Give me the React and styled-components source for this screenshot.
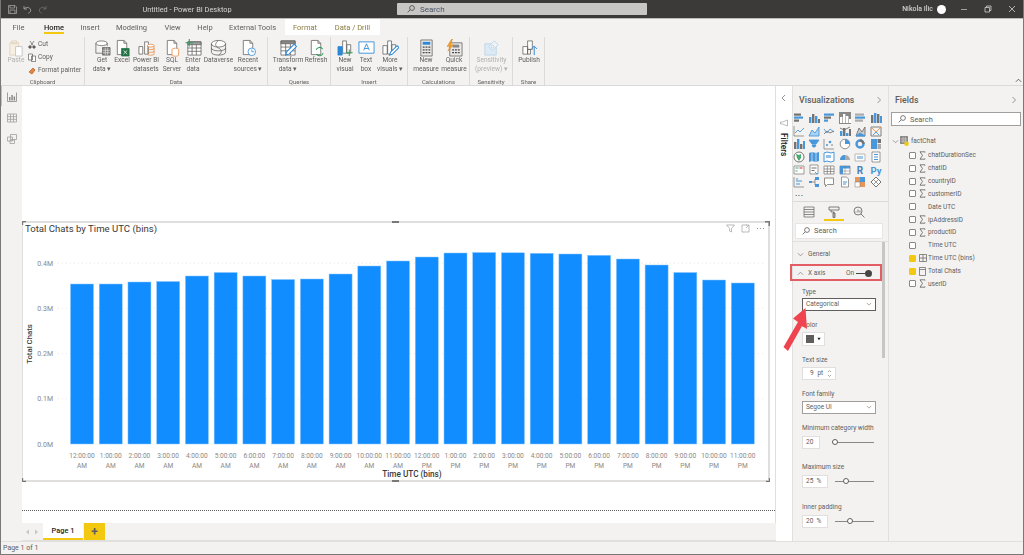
import React from 'react';
import styled, { createGlobalStyle } from 'styled-components';

const FONT = 'Roboto, "Open Sans", "Liberation Sans", sans-serif';

const Global = createGlobalStyle`
  html, body { margin: 0; padding: 0; background: #fff; }
  body { font-family: ${FONT}; overflow: hidden; }
  * { box-sizing: border-box; }
`;

const Win = styled.div`
  width: 1024px; height: 555px; display: flex; flex-direction: column;
  border: 1px solid #7a7876; border-top: 0; color: #252423; overflow: hidden;
  position: relative; filter: blur(0.35px);
`;

/* ---------- title bar ---------- */
const TitleBar = styled.div`
  height: 18px; flex: none; background: #3b3a39; display: flex; align-items: center; position: relative;
  margin: 0 -1px;
`;
const QuickIcons = styled.div`
  width: 397px; flex: none; display: flex; align-items: center; position: relative; padding-left: 8px; gap: 6px;
`;
const AppTitle = styled.div`
  position: absolute; left: 147px; width: 80px; text-align: center; white-space: nowrap; font-size: 7.4px; color: #d6d4d2;
  display: flex; justify-content: center;
`;
const TitleSearch = styled.div`
  width: 250px; height: 12px; background: #c8c6c4; border-radius: 1px; display: flex; align-items: center; gap: 5px; padding-left: 10px;
  font-size: 8px; color: #4a5568;
`;
const WinRight = styled.div`
  flex: 1; display: flex; align-items: center; justify-content: flex-end; color: #d2d0ce; font-size: 7px; font-weight: 500;
`;
const Avatar = styled.span`
  width: 9px; height: 9px; border-radius: 50%; background: #fff; margin: 0 6px 0 4px;
`;
const WinBtn = styled.span`
  width: 24px; display: flex; justify-content: center;
`;

/* ---------- tabs ---------- */
const TabRow = styled.div`
  height: 17px; flex: none; background: #f3f2f1; border-top: 1px solid #bdbbb9; position: relative; display: grid;
  grid-template-columns: 35px 36px 36px 47px 35px 30px 65px 40px 55px 1fr; align-items: stretch;
  font-size: 7.5px; color: #605e5c;
`;
const Tab = styled.div`
  display: flex; align-items: center; justify-content: center; position: relative; white-space: nowrap;
  font-weight: ${p => (p.$active ? 500 : 400)};
  color: ${p => (p.$gold ? '#8a7a3c' : p.$active ? '#252423' : '#605e5c')};
  background: ${p => (p.$white ? '#fff' : 'transparent')};
  ${p => p.$active && `&::after { content: ''; position: absolute; left: 8px; right: 8px; bottom: 1px; height: 2px; background: #f2c811; }`}
`;

/* ---------- ribbon ---------- */
const Ribbon = styled.div`
  height: 51px; flex: none; background: #f3f2f1; border-bottom: 1px solid #dcdad8; display: flex; position: relative;
`;
const Group = styled.div`
  width: ${p => p.$w}px; flex: none; border-right: 1px solid #dcdad8; margin: 2px 0 0; display: flex; flex-direction: column;
`;
const GroupBody = styled.div`
  flex: 1; display: flex; padding: 2px 0 0 ${p => p.$pl || 0}px; min-height: 0;
`;
const GroupLabel = styled.div`
  height: 7px; font-size: 6px; color: #605e5c; text-align: center; line-height: 7px;
`;
const RibBtn = styled.div`
  width: ${p => p.$w}px; flex: none; display: flex; flex-direction: column; align-items: center; text-align: center;
  font-size: 6.6px; line-height: 9px; color: ${p => (p.$off ? '#b3b0ad' : '#605e5c')}; white-space: nowrap;
  svg { display: block; margin-bottom: -1px; flex: none; width: 17px; height: 18px; }
`;
const SmallCol = styled.div`
  width: 56px; flex: none; display: flex; flex-direction: column; gap: 3px;
`;
const SmallBtn = styled.div`
  display: flex; align-items: center; gap: 2px; font-size: 6.6px; line-height: 10px; color: #605e5c; white-space: nowrap; height: 10px;
`;
const Collapse = styled.div`
  position: absolute; right: 1px; bottom: 1px; display: flex;
`;

/* ---------- main ---------- */
const Main = styled.div`
  flex: 1; min-height: 0; display: flex; background: #f3f2f1;
`;
const Rail = styled.div`
  width: 21px; flex: none; background: #f3f2f1; display: flex; flex-direction: column; align-items: center; position: relative;
  padding-top: 6px; gap: 11px;
`;
const RailMark = styled.div`
  position: absolute; left: -1px; top: 0; width: 2px; height: 20px; background: #f2c811;
`;
const Center = styled.div`
  width: 754px; flex: none; display: flex; flex-direction: column;
`;
const Canvas = styled.div`
  flex: 1; background: #fff; padding-top: 135px; min-height: 0; border-right: 1px solid #e1dfdd;
`;
const Visual = styled.div`
  width: 748px; height: 261px; border: 1px solid #e1dfdd; border-width: 2px 2px 2px 1px; position: relative;
`;
const Handle = styled.span`
  position: absolute; background: #7a7876;
  ${p => p.$pos === 'tl' && 'left:-1px; top:-2px; width:4px; height:4px; clip-path: polygon(0 0,100% 0,100% 30%,30% 30%,30% 100%,0 100%);'}
  ${p => p.$pos === 'tr' && 'right:-2px; top:-2px; width:5px; height:5px; clip-path: polygon(0 0,100% 0,100% 100%,70% 100%,70% 30%,0 30%);'}
  ${p => p.$pos === 'bl' && 'left:-1px; bottom:-2px; width:4px; height:4px; clip-path: polygon(0 0,30% 0,30% 70%,100% 70%,100% 100%,0 100%);'}
  ${p => p.$pos === 'br' && 'right:-2px; bottom:-2px; width:4px; height:4px; clip-path: polygon(70% 0,100% 0,100% 100%,0 100%,0 70%,70% 70%);'}
  ${p => p.$pos === 't' && 'left:369px; top:-2px; width:7px; height:2px;'}
  ${p => p.$pos === 'b' && 'left:369px; bottom:-2px; width:7px; height:2px;'}
`;
const VisualTitle = styled.div`
  position: absolute; left: 2px; top: 0; font-size: 9.6px; line-height: 12px; color: #3b3a39; white-space: nowrap;
`;
const VisualTools = styled.div`
  position: absolute; right: 3px; top: 1px; display: flex; gap: 6px; align-items: center;
`;
const Dotted = styled.div`
  margin-top: 28px; border-top: 1px dotted #605e5c; width: 753px;
`;
const PageTabs = styled.div`
  height: 18px; flex: none; background: #f3f2f1; display: flex; align-items: stretch; border-bottom: 1px solid #e1dfdd;
`;
const Nav = styled.div`
  width: 21px; flex: none; display: flex; align-items: center; justify-content: space-between; padding: 0 4px 0 3px; color: #c8c6c4;
`;
const PageTab = styled.div`
  width: 40px; background: #fff; border-bottom: 2px solid #f2c811; font-size: 7.4px; display: flex; align-items: center; justify-content: center; color: #252423; font-weight: 500;
`;
const AddTab = styled.div`
  width: 21px; background: #f2c811; font-size: 12px; font-weight: 700; color: #605e5c; display: flex; align-items: center; justify-content: center; line-height: 1; margin-left: 1px;
`;

const FilterPane = styled.div`
  width: 17px; flex: none; background: #fff; display: flex; flex-direction: column; align-items: center; padding: 8px 1px 0 0; border-right: 1px solid #e1dfdd;
`;
const FilterSpacer = styled.div`
  height: 17px; flex: none;
`;
const FilterLabel = styled.div`
  writing-mode: vertical-rl; font-size: 8.4px; font-weight: 500; color: #252423; margin-top: 6px; line-height: 10px;
`;
const VizPane = styled.div`
  width: 96px; flex: none; display: flex; flex-direction: column; border-right: 1px solid #e1dfdd; position: relative;
`;
const PaneHead = styled.div`
  height: 24px; flex: none; display: flex; align-items: center; justify-content: space-between; padding: 3px 5px 0 6px; font-size: 8.8px; font-weight: 500; color: #605e5c;
`;
const VizGrid = styled.div`
  display: grid; grid-template-columns: repeat(6, 15.4px); grid-auto-rows: 12.8px; margin-left: -2px; padding-top: 2px; justify-items: center; align-items: center;
`;
const VizCell = styled.div`
  width: 12px; height: 12px; display: flex; align-items: center; justify-content: center; background: ${p => (p.$on ? '#8a8886' : 'transparent')};
  opacity: ${p => (p.$on ? 1 : 0.85)};
`;
const Dots = styled.div`
  font-size: 8px; letter-spacing: 0.5px; color: #605e5c; line-height: 9px; padding-left: 2px; height: 9px; font-weight: 700;
`;
const PaneTabs = styled.div`
  margin-top: 3px; border-top: 1px solid #dcdad8; height: 21px; display: flex; padding-left: 9px; gap: 8px; align-items: flex-start; flex: none;
`;
const PaneTab = styled.div`
  width: 14px; height: 19px; display: flex; justify-content: center; padding-top: 4px; position: relative; margin: 0 ${p => (p.$on ? 3 : 0)}px;
  ${p => p.$on && `&::after { content:''; position:absolute; left:-3px; right:-3px; bottom:0; height:1.5px; background:#f2c811; }`}
`;
const SearchBox = styled.div`
  height: ${p => p.$h}px; background: #fff; border: 1px solid ${p => (p.$dark ? '#a19f9d' : '#e8e6e4')}; display: flex; align-items: center; gap: 4px; padding-left: 6px;
  font-size: 7.4px; color: #605e5c; margin: ${p => p.$m}; flex: none;
`;
const Scroller = styled.div`
  flex: 1; display: flex; min-height: 0; position: relative; border-top: 1px solid #e1dfdd;
`;
const Props = styled.div`
  flex: 1; min-width: 0; display: flex; flex-direction: column; font-size: 6.5px; color: #605e5c; padding-top: 3px;
`;
const Bar = styled.div`
  position: absolute; right: 3px; top: 0; width: 3px; height: 116px; background: #c8c6c4;
`;
const SectionRow = styled.div`
  height: 19px; display: flex; align-items: center; gap: 4px; padding-left: 4px; flex: none; white-space: nowrap; position: relative;
`;
const OnOff = styled.div`
  margin-left: auto; margin-right: 17px; display: flex; align-items: center; gap: 2px;
`;
const OffTrack = styled.span`
  width: 15px; height: 1px; background: #484644; position: relative; display: block;
  &::after { content:''; position:absolute; right:-1px; top:-3px; width:7px; height:7px; border-radius:50%; background:#484644; }
`;
const RedRect = styled.div`
  position: absolute; left: -3px; right: 6px; top: 0; bottom: 2px; border: 2px solid #e35d65;
`;
const Field = styled.div`
  padding-left: 9px; display: flex; flex-direction: column; flex: none; margin-top: ${p => p.$mt || 0}px; position: relative;
`;
const FieldLabel = styled.div`
  line-height: 10px; height: 10px; white-space: nowrap; margin-bottom: ${p => p.$mb ?? 2}px;
`;
const Box = styled.div`
  width: ${p => p.$w}px; height: ${p => p.$h || 13}px; background: #fff; border: 1px solid ${p => p.$b || '#e1dfdd'}; display: flex; align-items: center;
  padding: 0 3px; flex: none; justify-content: ${p => (p.$between ? 'space-between' : 'flex-start')}; gap: 3px; color: #605e5c;
`;
const SliderRow = styled.div`
  display: flex; align-items: center; gap: ${p => p.$gap}px;
`;
const Track = styled.div`
  width: ${p => p.$w}px; height: 1px; background: #8a8886; position: relative;
`;
const Thumb = styled.span`
  position: absolute; top: -2.5px; width: 6px; height: 6px; border: 1px solid #605e5c; border-radius: 50%; background: #fff;
`;
const Swatch = styled.span`
  width: 8px; height: 8px; background: #605e5c; display: block; flex: none;
`;
const FieldsPane = styled.div`
  flex: 1; display: flex; flex-direction: column; background: #f3f2f1;
`;
const TreeHead = styled.div`
  display: flex; align-items: center; font-size: 6.5px; color: #605e5c; height: 12px; margin: 9px 0 2px 3px; position: relative; gap: 1px;
`;
const TreeRow = styled.div`
  height: 12.85px; display: flex; align-items: center; font-size: 6.5px; color: #605e5c; padding-left: 20px; white-space: nowrap;
`;
const Check = styled.span`
  width: 7px; height: 7px; border: 1px solid #8a8886; background: ${p => (p.$on ? '#f2c811' : '#fff')}; flex: none; margin-right: 2px; display: block; border-radius: 1px;
  ${p => p.$on && 'border-color:#f2c811;'}
`;
const IconSlot = styled.span`
  width: 9px; flex: none; display: flex; justify-content: center; margin-right: 1px;
`;
const Arrow = styled.svg`
  position: absolute; left: 775px; top: 300px; pointer-events: none;
`;
const Status = styled.div`
  height: 13px; flex: none; background: #f3f2f1; border-top: 1px solid #e1dfdd; font-size: 7px; color: #605e5c; line-height: 13px; padding-left: 2px;
`;

/* ---------- icons ---------- */
const Save = () => <svg width="9" height="9" viewBox="0 0 9 9" fill="none" stroke="#a19f9d" strokeWidth=".8"><path d="M.5.5h6.5l1.500 1.500v6.500h-8z"/><path d="M2 .5v2.500h4.500v-2.500M2 8.500v-3.500h5v3.500"/></svg>;
const Undo = ({ c = '#a19f9d', flip }) => <svg width="9" height="9" viewBox="0 0 9 9" fill="none" stroke={c} strokeWidth=".9" style={flip ? { transform: 'scaleX(-1)' } : null}><path d="M1 1v3h3"/><path d="M1.200 4c1.500-2.500 6-2 6.500 1 .2 1.500-.8 2.800-2.500 3.200"/></svg>;
const Mag = ({ c = '#605e5c', s = 8 }) => <svg width={s} height={s} viewBox="0 0 8 8" fill="none" stroke={c} strokeWidth=".8"><circle cx="5" cy="3" r="2.400"/><path d="M3.200 4.800L.6 7.400"/></svg>;
const Chev = ({ d = 'r', c = '#8a8886', s = 7 }) => {
  const p = { r: 'M2.500 1l3 3-3 3', l: 'M5 1L2 4l3 3', d: 'M1 2.500l3 3 3-3', u: 'M1 5.500l3-3 3 3' }[d];
  return <svg width={s} height={s} viewBox="0 0 8 8" fill="none" stroke={c} strokeWidth=".9"><path d={p}/></svg>;
};
const Small = ({ children }) => <svg width="8" height="9" viewBox="0 0 8 9" fill="none" stroke="#605e5c" strokeWidth=".7">{children}</svg>;

const G = '#605e5c', L = '#8a8886';
const Ico = ({ children }) => <svg width="18" height="19" viewBox="0 0 18 19" fill="none" stroke={G} strokeWidth=".8">{children}</svg>;
const Doc = <path d="M3.500 1.500h7l3 3v12h-10z M10.500 1.500v3h3" fill="#fff"/>;

const rib = {
  paste: <svg width="18" height="19" viewBox="0 0 18 19" fill="none" stroke="#e3d3bd" strokeWidth="1"><path d="M2 4h9v13h-9z" fill="#f6efe3"/><path d="M4 2h5v3h-5z"/><path d="M8 8h7v10h-7z" fill="#fff" stroke="#c8c6c4"/></svg>,
  get: <Ico><ellipse cx="8" cy="4.500" rx="6" ry="2.500" fill="#fff"/><path d="M2 4.500v10.500h9M14 4.500v3"/><path d="M9 9h8v8h-8z" fill={L} stroke={G}/><path d="M9 12h8M9 14.500h8M12 9v8M14.500 9v8" stroke="#fff" strokeWidth=".5"/></Ico>,
  excel: <Ico>{Doc}<path d="M8 10h8v8h-8z" fill="#217346" stroke="#217346"/><path d="M10 12l4 4M14 12l-4 4" stroke="#fff"/></Ico>,
  pbi: <Ico><path d="M7 3h4v13h-4zM1 8h4v8h-4z" fill="#fff"/><ellipse cx="13.500" cy="7" rx="3.500" ry="1.500" stroke="#e8853a" fill="#fff"/><path d="M10 7v9c0 1.500 7 1.500 7 0v-9M10 10c0 1.500 7 1.500 7 0M10 13c0 1.500 7 1.500 7 0" stroke="#e8853a"/></Ico>,
  sql: <Ico>{Doc}<ellipse cx="12" cy="11" rx="3.500" ry="1.300" stroke="#e8853a" fill="#fff"/><path d="M8.500 11v6c0 1.500 7 1.500 7 0v-6" stroke="#e8853a" fill="#fff"/></Ico>,
  enter: <Ico><path d="M3 3h14v14h-14z" fill="#fff"/><path d="M3 3h14v3h-14z" fill="#a19f9d"/><path d="M3 9.500h14M3 13h14M7.500 6v11M12 6v11"/><path d="M4.500 0v8M.5 4h8" stroke="#2e9e5b" strokeWidth="1.100"/></Ico>,
  dv: <Ico><ellipse cx="9" cy="5" rx="7.500" ry="3.500" fill="#fff"/><path d="M1.500 5v9c0 4 15 4 15 0v-9M1.500 9.500c0 4 15 4 15 0"/><path d="M9 1.500c-4 3-4 6 0 8s4 5 0 7.500" /></Ico>,
  recent: <Ico>{Doc}<circle cx="12.500" cy="13.500" r="4" fill="#fff" stroke="#2b88d8"/><path d="M12.500 11v2.500h2.500" stroke="#2b88d8"/></Ico>,
  transform: <Ico><path d="M1 2h15v15h-15z" fill="#fff"/><path d="M1 2h15v3h-15z" fill={L}/><path d="M1 8.500h15M1 12.500h15M6 5v12M11 5v12"/><path d="M6 17l1-3.500 8-8 2.500 2.500-8 8z" fill="#fff" stroke="#2b88d8" strokeWidth="1.100"/></Ico>,
  refresh: <Ico>{Doc}<path d="M8.500 11.500a4 4 0 0 1 7-1M16 15a4 4 0 0 1-7 1" stroke="#2e9e5b" strokeWidth="1.100" fill="none"/></Ico>,
  newvis: <Ico><path d="M6 2h4v13h-4zM10.500 6h4v9h-4z" fill="#fff"/><path d="M1 8h4.500v9h-4.500z" fill="#2b88d8" stroke="#2b88d8"/><path d="M13 11v7M9.500 14.500h7" stroke="#2e9e5b" strokeWidth="1.100"/></Ico>,
  text: <svg width="18" height="19" viewBox="0 0 18 19" fill="none" stroke="#2b88d8" strokeWidth=".9"><path d="M1 3h16v12h-16z" fill="#fff"/><path d="M6 12l3-7 3 7M7 10h4"/></svg>,
  more: <Ico><path d="M6 2h4v14h-4zM1 7h4.500v9h-4.500zM10.500 6h4v6h-4z" fill="#fff"/><path d="M8 17l1-3 7-7 2 2-7 7z" fill="#fff" stroke="#2b88d8" strokeWidth="1.100"/></Ico>,
  calc: <Ico><path d="M3 1h12v17h-12z" fill="#e9e7e5"/><path d="M5 3h8v3h-8z" fill="#2b88d8" stroke="none"/><path d="M5 8.500h2M8 8.500h2M11 8.500h2M5 11.500h2M8 11.500h2M11 11.500h2M5 14.500h2M8 14.500h2M11 14.500h2" strokeWidth="1.300" stroke="#484644"/></Ico>,
  quick: <Ico><path d="M4 4h13v14h-13z" fill="#e9e7e5"/><path d="M7 6h7v3h-7z" fill="#8a8886" stroke="none"/><path d="M6.500 11.500h2M9.500 11.500h2M12.500 11.500h2M6.500 14.500h2M9.500 14.500h2M12.500 14.500h2" strokeWidth="1.300" stroke="#484644"/><path d="M6 0L1 8h3l-2 5 6-7h-3l2-6z" fill="#f0a030" stroke="#d08020" strokeWidth=".4"/></Ico>,
  sens: <svg width="18" height="19" viewBox="0 0 18 19" fill="none" stroke="#bcd3e6" strokeWidth=".9"><path d="M2 5h12v12h-12z" fill="#dceaf5"/><path d="M6 8l6-6 4 4-6 6z" fill="#eef4f9"/><circle cx="10" cy="8" r="1.500"/></svg>,
  publish: <Ico><path d="M7 2h5v9h-5zM2 8h5v8h-5zM7 11h3v5h-3z" fill="#fff"/><path d="M14 17v-9M11 10.500l3-3 3 3" stroke="#2b88d8" strokeWidth="1"/></Ico>,
};

/* visualization gallery */
const B = '#2b88d8', K = '#605e5c', GR = '#a19f9d', O = '#e8853a', Gn = '#2e9e5b';
const bars = (h, c1 = B, c2 = K) => h.map((v, i) => <rect key={i} x={1 + i * 3} y={11 - v} width="2.400" height={v} fill={i % 2 ? c2 : c1} />);
const hbars = (w, c1 = K, c2 = B) => w.map((v, i) => <rect key={i} x="1" y={1.500 + i * 3} width={v} height="2.200" fill={i % 2 ? c2 : c1} />);
const line = (d, c = B, f) => <path d={d} fill={f || 'none'} stroke={c} strokeWidth=".9" />;
const axes = <path d="M1 1v10h10" stroke={K} strokeWidth=".7" fill="none" />;
const gallery = [
  hbars([7, 9, 5]), bars([6, 9, 7, 4]), hbars([10, 7, 4], B, K), <g key="s">{bars([6, 9, 7, 4], '#fff', '#fff')}</g>, hbars([9, 10, 8], GR, B), bars([8, 10, 9, 7], K, B),
  <g>{axes}{line('M2 8l3-3 2 2 4-4')}</g>, <g>{line('M1 11l3-6 3 3 4-6v9z', B, '#9fcdf0')}</g>, <g>{line('M1 4l3 4 3-4 4 3', B)}{line('M1 9l3-3 3 2 4-2', K)}</g>, <g>{bars([5, 8, 3, 7])}{line('M1 3l4 2 6-3', K)}</g>, <g>{line('M2 11l3-8 3 4 3-5v9z', K, '#c7c5c3')}{line('M2 11l4-3 5 3z', B, '#2b88d8')}</g>, <g>{line('M1 2h10v9h-10z', K)}{line('M1 2l5 5 5-5', O)}{line('M3 10l3-3 3 3', B)}</g>,
  <g>{bars([7, 10, 5, 8], K, B)}</g>, <g>{line('M1 2h10l-3 4h-4zM4 7h4l-1 2h-2z', B, B)}</g>, <g>{axes}<circle cx="4" cy="7" r="1" fill={B}/><circle cx="7" cy="4" r="1.300" fill={B}/><circle cx="9" cy="7" r=".8" fill={K}/></g>, <g><circle cx="6" cy="6" r="4.800" fill="#fff" stroke={K} strokeWidth=".8"/><path d="M6 6v-4.800a4.800 4.800 0 0 1 4.800 4.800z" fill={B}/></g>, <g><circle cx="6" cy="6" r="3.500" fill="none" stroke={B} strokeWidth="2.400"/><path d="M6 2.500a3.500 3.500 0 0 1 3.500 3.500" fill="none" stroke={K} strokeWidth="2.400"/></g>, <g><path d="M1 1h6v10h-6z" fill={B}/><path d="M7.500 1h3.500v4h-3.500z" fill={K}/><path d="M7.500 6h3.500v5h-3.500z" fill={GR}/></g>,
  <g><circle cx="6" cy="6" r="5" fill="#fff" stroke={K}/><path d="M3 3l3 1 2-1v4l-2 3-2-3z" fill={Gn}/></g>, <g><path d="M1 2l3-1 4 1 3-1v9l-3 1-4-1-3 1z" fill={B}/><path d="M4 1v9M8 2v9" stroke="#fff" strokeWidth=".6"/></g>, <g><path d="M1 2l3-1 4 1 3-1v9l-3 1-4-1-3 1z" fill="#fff" stroke={B}/><path d="M3 4h5v3h-5z" fill={B} opacity=".6"/></g>, <g><path d="M1 9a5 5 0 0 1 10 0z" fill={GR}/><path d="M1 9a5 5 0 0 1 5-5v5z" fill={B}/></g>, <g><path d="M1 3h10v7h-10z" fill="#fff" stroke={GR} strokeWidth=".8"/><path d="M3 5h6v3h-6z" fill={B} opacity=".5"/></g>, <g><path d="M2 1h8v10h-8z" fill="#fff" stroke={K} strokeWidth=".7"/><path d="M4 3.500h4M4 6h4M4 8.500h4" stroke={B}/></g>,
  <g><path d="M1 2h10v8h-10z" fill="#fff" stroke={K} strokeWidth=".7"/><path d="M2.500 4h3M2.500 7h2" stroke={Gn} strokeWidth="1.200"/><path d="M6.500 4h3" stroke="#d13438" strokeWidth="1.200"/></g>, <g><path d="M2 1h8v9h-8z" fill="#fff" stroke={K} strokeWidth=".7"/><path d="M3.500 4h5M3.500 6.500h3" stroke={K}/><path d="M7 8l2 2" stroke={B}/></g>, <g><path d="M1 2h10v8h-10zM1 5h10M1 7.500h10M4.300 2v8M7.600 2v8" fill="#fff" stroke={K} strokeWidth=".7"/></g>, <g><path d="M1 2h10v8h-10z" fill="#fff" stroke={K} strokeWidth=".7"/><path d="M1 2h10v2.500h-10zM1 4.500h3v5.500h-3z" fill={B}/><path d="M1 7h10M6 2v8" stroke={K} strokeWidth=".5"/></g>, <text x="6" y="10" textAnchor="middle" fontSize="10" fontWeight="700" fill="#2b6cb0" fontFamily="Roboto">R</text>, <text x="6" y="10" textAnchor="middle" fontSize="9.500" fontWeight="700" fill="#2b88d8" fontFamily="Roboto">Py</text>,
  <g>{axes}<path d="M3 8h4M3 5h6M3 3h2" stroke={B} strokeWidth="1.100"/></g>, <g><path d="M1 5h3v2h-3zM7 1h4v3h-4zM7 8h4v3h-4z" fill={B}/><path d="M4 6h3M7 3v6" stroke={K} strokeWidth=".7"/></g>, <g><path d="M1.500 2h9v6.500h-6l-2 2v-2h-1z" fill="#fff" stroke={K} strokeWidth=".8"/></g>, <g><path d="M2.500 1h5l2 2v8h-7z" fill="#fff" stroke={K} strokeWidth=".7"/><path d="M4 6h4M4 8h3" stroke={B}/></g>, <g><path d="M1 1h10v10h-10z" fill={O}/><path d="M6 1h5v5h-5z" fill={B}/><path d="M1 6h5v5h-5z" fill="#fff" stroke={K} strokeWidth=".5"/></g>, <g><path d="M6 1l5 5-5 5-5-5z" fill="#fff" stroke={K}/><path d="M3.500 3.500l5 5M8.500 3.500l-5 5" stroke={K} strokeWidth=".7"/></g>,
];

/* chart */
const tops = [284, 284, 282, 281.5, 276, 272.5, 276, 279.5, 279, 274, 266, 261, 257, 253, 252.500, 252.800, 253.300, 254, 255.300, 259, 265, 272.500, 280, 283];
const hours = ['12:00:00', '1:00:00', '2:00:00', '3:00:00', '4:00:00', '5:00:00', '6:00:00', '7:00:00', '8:00:00', '9:00:00', '10:00:00', '11:00:00'];
const OX = 23, OY = 221;
const Chart = () => (
  <svg width="745" height="257" viewBox={`${OX} ${OY + 2} 745 257`} style={{ display: 'block' }} fontFamily={FONT}>
    {[0, 1, 2, 3, 4].map(i => {
      const y = 444 - i * 45.2;
      return <g key={i}>
        {i > 0 && <line x1="58" x2="766" y1={y} y2={y} stroke="#e1dfdd" strokeWidth=".7" strokeDasharray="1 3" />}
        <text x="53" y={y + 2.500} textAnchor="end" fontSize="7" fill="#8a8886">{`0.${i}M`}</text>
      </g>;
    })}
    {tops.map((t, i) => {
      const x = 70.500 + i * 28.73;
      return <g key={i}>
        <rect x={x} y={t} width="23" height={444 - t} fill="#118dff" stroke="#8cc6fb" strokeWidth=".5" />
        <text x={x + 11.500} y="457.500" textAnchor="middle" fontSize="6.600" fill="#8a8886">{hours[i % 12]}</text>
        <text x={x + 11.500} y="467.500" textAnchor="middle" fontSize="6.600" fill="#8a8886">{i < 12 ? 'AM' : 'PM'}</text>
      </g>;
    })}
    <text transform="translate(31.500,344) rotate(-90)" textAnchor="middle" fontSize="7.800" fontWeight="500" fill="#3b3a39">Total Chats</text>
    <text x="412" y="477" textAnchor="middle" fontSize="8.200" fontWeight="500" fill="#3b3a39">Time UTC (bins)</text>
  </svg>
);

const Sigma = () => <svg width="7" height="9" viewBox="0 0 7 9" fill="none" stroke="#605e5c" strokeWidth=".8"><path d="M6 1.500V.8H1l2.500 3.700L1 8.200h5v-.7"/></svg>;
const fields = [
  ['chatDurationSec', 's'], ['chatID', 's'], ['countryID', 's'], ['customerID', 's'], ['Date UTC', ''], ['ipAddressID', 's'],
  ['productID', 's'], ['Time UTC', ''], ['Time UTC (bins)', 't', 1], ['Total Chats', 'c', 1], ['userID', 's'],
];

export default function App() {
  return (
    <Win>
      <Global />
      <TitleBar>
        <QuickIcons><Save /><Undo /><Undo c="#6b6a68" flip />
          <AppTitle>Untitled - Power BI Desktop</AppTitle>
        </QuickIcons>
        <TitleSearch><Mag c="#484644" />Search</TitleSearch>
        <WinRight>Nikola Ilic<Avatar />
          <WinBtn><svg width="8" height="8" viewBox="0 0 8 8" stroke="#a19f9d"><path d="M1 4.500h6"/></svg></WinBtn>
          <WinBtn><svg width="8" height="8" viewBox="0 0 8 8" fill="none" stroke="#d2d0ce" strokeWidth=".8"><path d="M1 2.500h4.500v4.500h-4.500zM2.500 2.500v-1.500h4.500v4.500h-1.500"/></svg></WinBtn>
          <WinBtn><svg width="8" height="8" viewBox="0 0 8 8" stroke="#d2d0ce" strokeWidth=".8"><path d="M1 1l6 6M7 1l-6 6"/></svg></WinBtn>
        </WinRight>
      </TitleBar>
      <TabRow>
        <Tab>File</Tab><Tab $active>Home</Tab><Tab>Insert</Tab><Tab>Modeling</Tab><Tab>View</Tab><Tab>Help</Tab><Tab>External Tools</Tab>
        <Tab $white $gold>Format</Tab><Tab $white $gold>Data / Drill</Tab>
      </TabRow>
      <Ribbon>
        <Group $w={84}>
          <GroupBody $pl={3}>
            <RibBtn $w={24} $off>{rib.paste}Paste</RibBtn>
            <SmallCol>
              <SmallBtn><Small><path d="M2 1l3 4.500M6 1l-3 4.500"/><circle cx="2" cy="7" r="1.300" fill="#605e5c"/><circle cx="6" cy="7" r="1.300" fill="#605e5c"/></Small>Cut</SmallBtn>
              <SmallBtn><Small><path d="M.5 1h4v6h-4zM3.500 3h4v5.500h-4z" fill="#fff"/></Small>Copy</SmallBtn>
              <SmallBtn><Small><path d="M1 6l4-4 2 2-3 4z" fill="#e8853a" stroke="#b05a20"/></Small>Format painter</SmallBtn>
            </SmallCol>
          </GroupBody>
          <GroupLabel>Clipboard</GroupLabel>
        </Group>
        <Group $w={183}>
          <GroupBody $pl={6}>
            <RibBtn $w={22}>{rib.get}<span>Get</span><span>data ▾</span></RibBtn>
            <RibBtn $w={18}>{rib.excel}Excel</RibBtn>
            <RibBtn $w={30}>{rib.pbi}<span>Power BI</span><span>datasets</span></RibBtn>
            <RibBtn $w={22}>{rib.sql}<span>SQL</span><span>Server</span></RibBtn>
            <RibBtn $w={20}>{rib.enter}<span>Enter</span><span>data</span></RibBtn>
            <RibBtn $w={31}>{rib.dv}Dataverse</RibBtn>
            <RibBtn $w={28}>{rib.recent}<span>Recent</span><span>sources ▾</span></RibBtn>
          </GroupBody>
          <GroupLabel>Data</GroupLabel>
        </Group>
        <Group $w={63}>
          <GroupBody $pl={4}>
            <RibBtn $w={32}>{rib.transform}<span>Transform</span><span>data ▾</span></RibBtn>
            <RibBtn $w={24}>{rib.refresh}Refresh</RibBtn>
          </GroupBody>
          <GroupLabel>Queries</GroupLabel>
        </Group>
        <Group $w={77}>
          <GroupBody $pl={2}>
            <RibBtn $w={24}>{rib.newvis}<span>New</span><span>visual</span></RibBtn>
            <RibBtn $w={18}>{rib.text}<span>Text</span><span>box</span></RibBtn>
            <RibBtn $w={30}>{rib.more}<span>More</span><span>visuals ▾</span></RibBtn>
          </GroupBody>
          <GroupLabel>Insert</GroupLabel>
        </Group>
        <Group $w={62}>
          <GroupBody $pl={4}>
            <RibBtn $w={28}>{rib.calc}<span>New</span><span>measure</span></RibBtn>
            <RibBtn $w={28}>{rib.quick}<span>Quick</span><span>measure</span></RibBtn>
          </GroupBody>
          <GroupLabel>Calculations</GroupLabel>
        </Group>
        <Group $w={43}>
          <GroupBody $pl={5}>
            <RibBtn $w={33} $off>{rib.sens}<span>Sensitivity</span><span>(preview) ▾</span></RibBtn>
          </GroupBody>
          <GroupLabel>Sensitivity</GroupLabel>
        </Group>
        <Group $w={32}>
          <GroupBody $pl={3}>
            <RibBtn $w={26}>{rib.publish}Publish</RibBtn>
          </GroupBody>
          <GroupLabel>Share</GroupLabel>
        </Group>
        <Collapse><Chev d="u" c="#484644" s={7} /></Collapse>
      </Ribbon>
      <Main>
        <Rail>
          <RailMark />
          <svg width="10" height="10" viewBox="0 0 10 10" fill="#8a8886"><path d="M.5.5v9h9v-9" fill="none" stroke="#8a8886" strokeWidth=".8"/><path d="M2 5h1.500v3.500h-1.500zM4.300 3h1.500v5.500h-1.500zM6.600 4.500h1.500v4h-1.500z"/></svg>
          <svg width="10" height="10" viewBox="0 0 10 10" fill="none" stroke="#a19f9d" strokeWidth=".8"><path d="M.5 1h9v8h-9zM.5 3.600h9M.5 6.300h9M3.500 1v8M6.500 1v8"/></svg>
          <svg width="10" height="10" viewBox="0 0 10 10" fill="none" stroke="#a19f9d" strokeWidth=".8"><path d="M3.500.5h6v5h-6zM.5 3h5v4h-5zM3 6h4.500v3.500h-4.500z" fill="#f3f2f1"/></svg>
        </Rail>
        <Center>
          <Canvas>
            <Visual>
              <Handle $pos="tl" /><Handle $pos="tr" /><Handle $pos="bl" /><Handle $pos="br" /><Handle $pos="t" /><Handle $pos="b" />
              <VisualTitle>Total Chats by Time UTC (bins)</VisualTitle>
              <VisualTools>
                <svg width="9" height="9" viewBox="0 0 9 9" fill="none" stroke="#a19f9d" strokeWidth=".7"><path d="M.5 1h8L5.500 4.500v3.500l-2-1v-2.500z"/></svg>
                <svg width="9" height="9" viewBox="0 0 9 9" fill="none" stroke="#a19f9d" strokeWidth=".7"><path d="M6 1H1v7h7V4M5 1h3v3M8 1L5 4"/></svg>
                <svg width="9" height="9" viewBox="0 0 9 9" fill="#8a8886"><circle cx="1.500" cy="4.500" r=".6"/><circle cx="4.500" cy="4.500" r=".6"/><circle cx="7.500" cy="4.500" r=".6"/></svg>
              </VisualTools>
              <Chart />
            </Visual>
            <Dotted />
          </Canvas>
          <PageTabs>
            <Nav><svg width="5" height="6" viewBox="0 0 5 6" fill="#c8c6c4"><path d="M4 .5L1 3l3 2.500z"/></svg><svg width="5" height="6" viewBox="0 0 5 6" fill="#c8c6c4"><path d="M1 .5L4 3 1 5.500z"/></svg></Nav>
            <PageTab>Page 1</PageTab>
            <AddTab>+</AddTab>
          </PageTabs>
        </Center>
        <FilterPane>
          <Chev d="l" c="#8a8886" s={8} />
          <FilterSpacer />
          <svg width="8" height="8" viewBox="0 0 8 8" fill="none" stroke="#a19f9d" strokeWidth=".7"><path d="M7.500 1v6L2.500 5H.5V3h2z"/></svg>
          <FilterLabel>Filters</FilterLabel>
        </FilterPane>
        <VizPane>
          <PaneHead>Visualizations<Chev d="r" c="#8a8886" s={8} /></PaneHead>
          <VizGrid>
            {gallery.map((g, i) => (
              <VizCell key={i} $on={i === 3}>
                <svg width="12" height="12" viewBox="0 0 12 12">{g}</svg>
              </VizCell>
            ))}
          </VizGrid>
          <Dots>...</Dots>
          <PaneTabs>
            <PaneTab><svg width="12" height="12" viewBox="0 0 12 12" fill="none" stroke="#605e5c" strokeWidth=".7"><path d="M1 1h10v10h-10zM1 3.500h10M1 6h10M1 8.500h10"/></svg></PaneTab>
            <PaneTab $on><svg width="12" height="12" viewBox="0 0 12 12" fill="none" stroke="#605e5c" strokeWidth=".8"><path d="M1 1h10v3h-10zM3 4v2h3v5"/><path d="M5 7h2v4.500h-2z"/></svg></PaneTab>
            <PaneTab><svg width="12" height="12" viewBox="0 0 12 12" fill="none" stroke="#605e5c" strokeWidth=".8"><circle cx="5" cy="5" r="4"/><path d="M8 8l3.500 3.500"/><path d="M3 6.500v-1M5 6.500v-3M7 6.500v-2"/></svg></PaneTab>
          </PaneTabs>
          <SearchBox $h={16} $m="1px 5px 2px 2px"><Mag />Search</SearchBox>
          <Scroller>
            <Props>
              <SectionRow><Chev d="d" />General</SectionRow>
              <SectionRow><RedRect /><Chev d="u" />X axis<OnOff>On<OffTrack /></OnOff></SectionRow>
              <Field $mt={4}>
                <FieldLabel $mb={1}>Type</FieldLabel>
                <Box $w={74} $b="#605e5c" $between>Categorical<Chev d="d" s={6} /></Box>
              </Field>
              <Field $mt={9}>
                <FieldLabel>Color</FieldLabel>
                <Box $w={23} $h={14}><Swatch /><svg width="5" height="4" viewBox="0 0 5 4" fill="#252423"><path d="M.5.500h4L2.500 3.500z"/></svg></Box>
              </Field>
              <Field $mt={9}>
                <FieldLabel>Text size</FieldLabel>
                <Box $w={34} $between><span style={{ paddingLeft: 4 }}>9</span><span>pt</span><svg width="5" height="9" viewBox="0 0 5 9" fill="none" stroke="#8a8886" strokeWidth=".7"><path d="M1 3l1.500-1.500L4 3M1 6l1.500 1.500L4 6"/></svg></Box>
              </Field>
              <Field $mt={9}>
                <FieldLabel>Font family</FieldLabel>
                <Box $w={74} $b="#a19f9d" $between>Segoe UI<Chev d="d" s={6} /></Box>
              </Field>
              <Field $mt={9}>
                <FieldLabel $mb={3}>Minimum category width</FieldLabel>
                <SliderRow $gap={12}><Box $w={18}>20</Box><Track $w={42}><Thumb style={{ left: 0 }} /></Track></SliderRow>
              </Field>
              <Field $mt={13}>
                <FieldLabel $mb={3}>Maximum size</FieldLabel>
                <SliderRow $gap={7}><Box $w={26}>25&nbsp;&nbsp;%</Box><Track $w={39}><Thumb style={{ left: 8 }} /></Track></SliderRow>
              </Field>
              <Field $mt={14}>
                <FieldLabel $mb={3}>Inner padding</FieldLabel>
                <SliderRow $gap={7}><Box $w={26}>20&nbsp;&nbsp;%</Box><Track $w={39}><Thumb style={{ left: 12 }} /></Track></SliderRow>
              </Field>
            </Props>
            <Bar />
          </Scroller>
        </VizPane>
        <FieldsPane>
          <PaneHead>Fields<Chev d="r" c="#8a8886" s={8} /></PaneHead>
          <SearchBox $h={14} $m="2px 2px 0 2px" $dark><Mag />Search</SearchBox>
          <TreeHead>
            <Chev d="d" s={7} />
            <svg width="10" height="11" viewBox="0 0 10 11"><path d="M.5.500h7v7h-7z" fill="#8a8886" stroke="#605e5c" strokeWidth=".6"/><path d="M.5 3h7M.5 5.200h7M3 .5v7M5.300.5v7" stroke="#fff" strokeWidth=".4"/><circle cx="6.500" cy="7.800" r="2.300" fill="#f2c811"/></svg>
            factChat
          </TreeHead>
          {fields.map(([n, t, on]) => (
            <TreeRow key={n}>
              <Check $on={on} />
              <IconSlot>
                {t === 's' && <Sigma />}
                {t === 't' && <svg width="8" height="8" viewBox="0 0 8 8" fill="none" stroke="#605e5c" strokeWidth=".7"><path d="M.5.500h7v7h-7zM.5 4h7M4 .5v7"/></svg>}
                {t === 'c' && <svg width="7" height="9" viewBox="0 0 7 9" fill="none" stroke="#605e5c" strokeWidth=".7"><path d="M.5.500h6v8h-6zM.5 2.500h6"/></svg>}
              </IconSlot>
              {n}
            </TreeRow>
          ))}
        </FieldsPane>
      </Main>
      <Status>Page 1 of 1</Status>
      <Arrow width="40" height="60" viewBox="775 300 40 60">
        <path d="M804.500 308L792 318.500 797 322 782.500 347 787 351 801 326 806 329z" fill="#ef4450" />
      </Arrow>
    </Win>
  );
}
